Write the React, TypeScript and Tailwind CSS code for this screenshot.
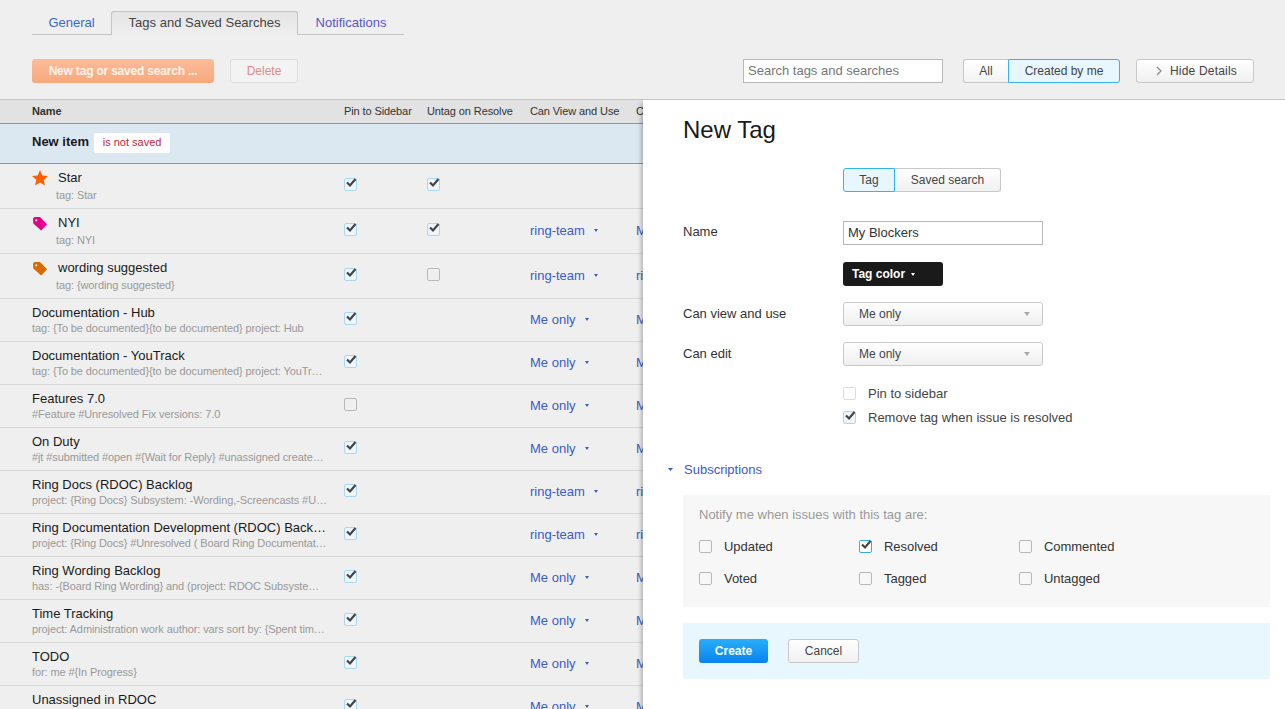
import { ReactNode } from 'react';

interface TagRow {
  name: string;
  query: string;
  pinned: boolean;
  untag?: boolean;
  view?: string;
  edit?: string;
  icon?: 'star' | 'pink' | 'orange';
}

const rows: TagRow[] = [
  { name: 'Star', query: 'tag: Star', pinned: true, untag: true, icon: 'star' },
  { name: 'NYI', query: 'tag: NYI', pinned: true, untag: true, view: 'ring-team', edit: 'Me only', icon: 'pink' },
  { name: 'wording suggested', query: 'tag: {wording suggested}', pinned: true, untag: false, view: 'ring-team', edit: 'ring-team', icon: 'orange' },
  { name: 'Documentation - Hub', query: 'tag: {To be documented}{to be documented} project: Hub', pinned: true, view: 'Me only', edit: 'Me only' },
  { name: 'Documentation - YouTrack', query: 'tag: {To be documented}{to be documented} project: YouTrack sort by: votes', pinned: true, view: 'Me only', edit: 'Me only' },
  { name: 'Features 7.0', query: '#Feature #Unresolved Fix versions: 7.0', pinned: false, view: 'Me only', edit: 'Me only' },
  { name: 'On Duty', query: '#jt #submitted #open #{Wait for Reply} #unassigned created: today', pinned: true, view: 'Me only', edit: 'Me only' },
  { name: 'Ring Docs (RDOC) Backlog', query: 'project: {Ring Docs} Subsystem: -Wording,-Screencasts #Unresolved', pinned: true, view: 'ring-team', edit: 'ring-team' },
  { name: 'Ring Documentation Development (RDOC) Backlog', query: 'project: {Ring Docs} #Unresolved ( Board Ring Documentation: Backlog )', pinned: true, view: 'ring-team', edit: 'ring-team' },
  { name: 'Ring Wording Backlog', query: 'has: -{Board Ring Wording} and (project: RDOC Subsystem: Wording)', pinned: true, view: 'Me only', edit: 'Me only' },
  { name: 'Time Tracking', query: 'project: Administration work author: vars sort by: {Spent time} desc', pinned: true, view: 'Me only', edit: 'Me only' },
  { name: 'TODO', query: 'for: me #{In Progress}', pinned: true, view: 'Me only', edit: 'Me only' },
  { name: 'Unassigned in RDOC', query: 'project: RDOC #Unassigned #Unresolved', pinned: true, view: 'Me only', edit: 'Me only' },
];

function Caret({ className, w = 5, h = 3 }: { className: string; w?: number; h?: number }) {
  return (
    <svg width={w} height={h} viewBox="0 0 5 3" preserveAspectRatio="none" className={className}>
      <path d="M0 0h5L2.5 3z" fill="currentColor" />
    </svg>
  );
}

function Check({ checked, light, strong }: { checked: boolean; light?: boolean; strong?: boolean }) {
  const tone = checked
    ? strong
      ? 'border-[#3fa9e8] bg-white'
      : 'border-[#a9d8f0] bg-[#eef6fb]'
    : light
      ? 'border-[#dcdcdc] bg-white'
      : 'border-[#b8b8b8] bg-transparent';
  return (
    <span className={`relative block h-[13px] w-[13px] shrink-0 rounded-[2px] border ${tone}`}>
      {checked && (
        <svg width="13" height="12" viewBox="0 0 13 12" className="absolute left-0 top-[-2px]">
          <path d="M2 5.5l3 3L10.5 2" fill="none" stroke="#444" strokeWidth="2.2" />
        </svg>
      )}
    </span>
  );
}

function TagIcon({ color }: { color: string }) {
  return (
    <svg width="16" height="16" viewBox="0 0 16 16">
      <path
        fillRule="evenodd"
        d="M1 2.5L2.5 1H8l7 7.2L9.2 14.5 1.3 7.6zM4.2 3.2a1.1 1.1 0 100 2.2 1.1 1.1 0 000-2.2z"
        fill={color}
      />
    </svg>
  );
}

function RowIcon({ icon }: { icon: 'star' | 'pink' | 'orange' }) {
  if (icon === 'star') {
    return (
      <svg width="16" height="16" viewBox="0 0 16 16">
        <path d="M8 0l2.3 5.4 5.7.5-4.3 3.8 1.3 5.8L8 12.4l-5 3.1 1.3-5.8L0 5.9l5.7-.5z" fill="#ff5f00" />
      </svg>
    );
  }
  return (
    <div className="pt-[1px]">
      <TagIcon color={icon === 'pink' ? '#e6008c' : '#d96a00'} />
    </div>
  );
}

function Access({ label }: { label?: string }) {
  if (!label) return null;
  return (
    <div className="flex items-center whitespace-nowrap text-[13px] text-[#3b5cc4]">
      <span>{label}</span>
      <Caret className="ml-[9px] text-[#3b5cc4]" w={4} />
    </div>
  );
}

function ListRow({ row }: { row: TagRow }) {
  const tall = !!row.icon;
  return (
    <div
      className={`grid grid-cols-[344px_83px_103px_106px_1fr] border-b border-[#d8d8d8] ${tall ? 'h-[45px]' : 'h-[43px]'}`}
    >
      <div className="min-w-0 pl-[32px] pr-[16px]">
        {tall ? (
          <div className="flex">
            <div className="w-[26px] shrink-0 pt-[6px]">
              <RowIcon icon={row.icon!} />
            </div>
            <div className="min-w-0">
              <div className="pt-[6px] text-[13px] leading-[16px] text-[#1a1a1a]">{row.name}</div>
              <div className="ml-[-2px] mt-[1px] truncate text-[11px] leading-[16px] tracking-[-0.1px] text-[#999]">
                {row.query}
              </div>
            </div>
          </div>
        ) : (
          <>
            <div className="truncate pt-[6px] text-[13px] leading-[16px] text-[#1a1a1a]">{row.name}</div>
            <div className="truncate text-[11px] leading-[14px] tracking-[-0.1px] text-[#999]">{row.query}</div>
          </>
        )}
      </div>
      <div className={tall ? 'pt-[14px]' : 'pt-[13px]'}>
        <Check checked={row.pinned} />
      </div>
      <div className="pt-[14px]">{row.untag !== undefined && <Check checked={row.untag} />}</div>
      <div className={tall ? 'pt-[12px]' : 'pt-[11px]'}>
        <Access label={row.view} />
      </div>
      <div className={tall ? 'pt-[12px]' : 'pt-[11px]'}>
        <Access label={row.edit} />
      </div>
    </div>
  );
}

function Field({ label, children, labelClass }: { label?: string; children: ReactNode; labelClass: string }) {
  return (
    <div className="flex pl-[40px]">
      <div className={`w-[160px] shrink-0 text-[13px] leading-[15px] text-[#333] ${labelClass}`}>{label}</div>
      <div>{children}</div>
    </div>
  );
}

function SelectBox({ value }: { value: string }) {
  return (
    <div className="flex h-[24px] w-[200px] items-center justify-between rounded-[3px] border border-[#c8c8c8] bg-gradient-to-b from-white to-[#efefef] pl-[15px] pr-[12px] text-[12px] text-[#444]">
      <span>{value}</span>
      <Caret className="text-[#aaa]" w={6} h={4} />
    </div>
  );
}

function Subscription({ label, checked }: { label: string; checked?: boolean }) {
  return (
    <div className="flex items-center gap-[12px] text-[13px] tracking-[-0.05px] text-[#333]">
      <Check checked={!!checked} strong />
      <span>{label}</span>
    </div>
  );
}

export default function App() {
  return (
    <div className="relative h-[709px] w-[1285px] overflow-hidden bg-[#efefef] font-['Liberation_Sans',Arial,sans-serif]">
      <div className="h-[99px]">
        <div className="flex items-end pl-[32px] pt-[11px] text-[13px]">
          <div className="flex h-[24px] w-[79px] items-center justify-center border-b border-[#c4c4c4] text-[#3b67c9]">
            General
          </div>
          <div className="flex h-[24px] w-[187px] items-center justify-center rounded-t-[3px] border border-b-0 border-[#c4c4c4] bg-gradient-to-b from-[#e4e4e4] to-[#efefef] pb-[1px] text-[#444]">
            Tags and Saved Searches
          </div>
          <div className="flex h-[24px] w-[106px] items-center justify-center border-b border-[#c4c4c4] text-[#5a55c8]">
            Notifications
          </div>
        </div>
        <div className="mt-[24px] flex items-center pl-[32px] pr-[31px]">
          <div className="flex h-[24px] w-[182px] items-center justify-center rounded-[3px] bg-gradient-to-b from-[#fcbc9a] to-[#f8a87c] text-[12px] font-bold tracking-[-0.2px] text-[#fff3ea]">
            New tag or saved search ...
          </div>
          <div className="ml-[16px] flex h-[24px] w-[68px] items-center justify-center rounded-[3px] border border-[#dcdcdc] bg-[#f3f3f3] text-[12px] text-[#e08a8a]">
            Delete
          </div>
          <div className="ml-auto flex h-[24px] w-[200px] items-center border border-[#b8b8b8] bg-white pl-[4px] text-[13px] text-[#777]">
            Search tags and searches
          </div>
          <div className="ml-[20px] flex h-[24px] text-[12px] text-[#444]">
            <div className="flex w-[45px] items-center justify-center rounded-l-[3px] border border-r-0 border-[#c8c8c8] bg-gradient-to-b from-white to-[#f3f3f3]">
              All
            </div>
            <div className="flex w-[112px] items-center justify-center rounded-r-[3px] border border-[#35b1f5] bg-[#e8f6fd]">
              Created by me
            </div>
          </div>
          <div className="ml-[16px] flex h-[24px] w-[118px] items-center justify-center gap-[8px] rounded-[3px] border border-[#c8c8c8] bg-gradient-to-b from-white to-[#f0f0f0] pl-[3px] text-[12px] tracking-[0.2px] text-[#444]">
            <svg width="6" height="10" viewBox="0 0 6 10">
              <path d="M1 1l4 4-4 4" fill="none" stroke="#888" strokeWidth="1.2" />
            </svg>
            <span>Hide Details</span>
          </div>
        </div>
      </div>

      <div className="grid h-[25px] grid-cols-[344px_83px_103px_106px_1fr] items-center border-t border-b border-t-[#c4c4c4] border-b-[#42aeea] bg-[#e2e2e2] text-[11px] tracking-[-0.1px] text-[#333]">
        <div className="pl-[32px] font-bold">Name</div>
        <div>Pin to Sidebar</div>
        <div>Untag on Resolve</div>
        <div>Can View and Use</div>
        <div>Can Edit</div>
      </div>
      <div className="flex h-[40px] items-center border-b border-[#42aeea] bg-[#dbe8f2] pb-[4px] pl-[32px]">
        <span className="text-[13px] font-bold text-[#1a1a1a]">New item</span>
        <span className="ml-[5px] mt-[2px] flex h-[20px] w-[76px] items-center justify-center rounded-[2px] bg-white pb-[1px] text-[11px] text-[#c01f3c]">
          is not saved
        </span>
      </div>
      {rows.map((row) => (
        <ListRow key={row.name} row={row} />
      ))}

      {/* details panel slides over the list */}
      <div className="absolute bottom-0 left-[643px] right-0 top-[99px] border-t border-[#c4c4c4] bg-white shadow-[-3px_3px_4px_-1px_rgba(0,0,0,0.25)]">
        <h1 className="pl-[40px] pt-[16px] text-[24px] font-normal leading-[28px] text-[#1a1a1a]">New Tag</h1>
        <div className="ml-[200px] mt-[24px] flex h-[24px] text-[12px] text-[#444]">
          <div className="flex w-[52px] items-center justify-center rounded-l-[3px] border border-[#35b1f5] bg-[#e8f6fd]">
            Tag
          </div>
          <div className="flex w-[106px] items-center justify-center rounded-r-[3px] border border-l-0 border-[#c8c8c8] bg-gradient-to-b from-white to-[#f0f0f0]">
            Saved search
          </div>
        </div>

        <div className="mt-[29px]">
          <Field label="Name" labelClass="pt-[3px]">
            <div className="flex h-[24px] w-[200px] items-center border border-[#b8b8b8] bg-white pl-[4px] text-[13px] text-[#333]">
              My Blockers
            </div>
          </Field>
        </div>
        <div className="ml-[200px] mt-[17px] flex h-[24px] w-[100px] items-center rounded-[3px] bg-[#1a1a1a] pl-[9px] text-[12px] font-bold text-white">
          Tag color
          <Caret className="ml-[6px] text-white" w={4} />
        </div>
        <div className="mt-[16px]">
          <Field label="Can view and use" labelClass="pt-[4px]">
            <SelectBox value="Me only" />
          </Field>
        </div>
        <div className="mt-[16px]">
          <Field label="Can edit" labelClass="pt-[4px]">
            <SelectBox value="Me only" />
          </Field>
        </div>
        <div className="ml-[200px] mt-[18px] flex items-center gap-[12px] text-[13px] text-[#444]">
          <Check checked={false} light />
          <span>Pin to sidebar</span>
        </div>
        <div className="ml-[200px] mt-[4px] flex items-center gap-[12px] text-[13px] text-[#444]">
          <Check checked />
          <span>Remove tag when issue is resolved</span>
        </div>

        <div className="ml-[25px] mt-[33px] flex items-center gap-[11px] text-[13px] text-[#3b5cc4]">
          <Caret className="text-[#3b5cc4]" />
          <span>Subscriptions</span>
        </div>

        <div className="ml-[40px] mr-[15px] mt-[15px] h-[112px] bg-[#f7f7f7] pl-[16px] pt-[12px]">
          <div className="text-[13px] leading-[15px] text-[#999]">Notify me when issues with this tag are:</div>
          <div className="mt-[15px] grid grid-cols-[160px_160px_160px] gap-y-[13px]">
            <Subscription label="Updated" />
            <Subscription label="Resolved" checked />
            <Subscription label="Commented" />
            <Subscription label="Voted" />
            <Subscription label="Tagged" />
            <Subscription label="Untagged" />
          </div>
        </div>

        <div className="ml-[40px] mr-[15px] mt-[16px] flex h-[56px] items-center gap-[20px] bg-[#e8f6fd] pl-[16px]">
          <div className="flex h-[24px] w-[69px] items-center justify-center rounded-[3px] bg-gradient-to-b from-[#28aef8] to-[#0a82f0] text-[12px] font-bold text-white">
            Create
          </div>
          <div className="flex h-[24px] w-[71px] items-center justify-center rounded-[3px] border border-[#c8c8c8] bg-gradient-to-b from-white to-[#f0f0f0] text-[12px] text-[#444]">
            Cancel
          </div>
        </div>
      </div>
    </div>
  );
}
